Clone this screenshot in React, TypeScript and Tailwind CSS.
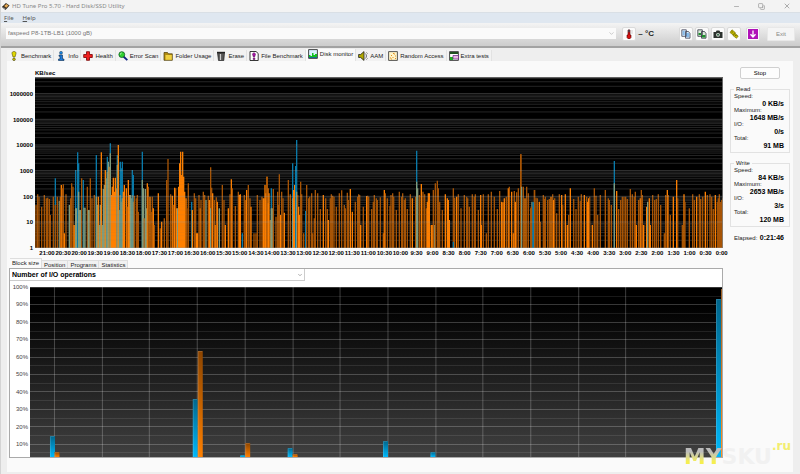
import type { ReactNode } from "react";
import { ChevronDown, Copy, Minus, X } from "lucide-react";

/* ICONS */
const icons: Record<string, ReactNode> = {
  benchmark: (
    <>
      <path d="M5 .5c1.500 0 2.200.8 2 2L6 6H4L3 2.500C2.900 1.300 3.500.5 5 .5z" fill="#e0d800" stroke="#55500a" strokeWidth=".6" />
      <circle cx="5" cy="8.300" r="1.300" fill="#d0c800" stroke="#44400a" strokeWidth=".6" />
    </>
  ),
  info: (
    <>
      <circle cx="5" cy="1.800" r="1.500" fill="#1b86e0" stroke="#123" strokeWidth=".4" />
      <path d="M3 4h3.500v4H8v1.500H2.500V8H4V5.300H3z" fill="#1b78d8" stroke="#0c2c50" strokeWidth=".6" />
    </>
  ),
  health: <path d="M3.500.7h3v2.800h2.800v3H6.500v2.800h-3V6.500H.7v-3h2.800z" fill="#f02020" stroke="#700" strokeWidth=".8" />,
  scan: (
    <>
      <path d="M5.500 5.500l3.800 3.600" stroke="#102080" strokeWidth="1.800" />
      <circle cx="3.800" cy="3.600" r="2.900" fill="#30d030" stroke="#0a5a20" strokeWidth=".8" />
      <path d="M2 3.400L3.600 2" stroke="#d8ffd8" strokeWidth=".9" />
    </>
  ),
  folder: (
    <>
      <path d="M1 1.500h3.500l1 1.300h3.800v6.500H1z" fill="#b08a10" stroke="#4a3a05" strokeWidth=".7" />
      <path d="M2.500 4h6.300v4.800H2.500z" fill="#f0d040" />
    </>
  ),
  erase: (
    <>
      <path d="M1.500 2h7l-.7 7.500H2.500z" fill="#555" stroke="#111" strokeWidth=".6" />
      <path d="M1 1.400h8" stroke="#222" strokeWidth="1.200" />
      <path d="M4.500 3v6" stroke="#ccc" strokeWidth="1.200" />
    </>
  ),
  file: (
    <>
      <path d="M1 .5h6l2.200 2v7H1z" fill="#fff" stroke="#222" strokeWidth=".9" />
      <path d="M5 2c1.300 0 1.500.9 1.300 1.700L5.500 6h-1l-.8-2.300C3.500 2.900 3.700 2 5 2zM4.300 7h1.500v1.500H4.300z" fill="#b010b0" stroke="#601060" strokeWidth=".7" />
    </>
  ),
  monitor: (
    <>
      <path d="M.6.6h8.800v8.800H.6z" fill="#d8f0ff" stroke="#333" strokeWidth=".9" />
      <path d="M1 9V6h1.500v1H4V4h1.500v2H7V5h2v4z" fill="#10c020" />
      <path d="M1 8h8v1H1z" fill="#107090" />
    </>
  ),
  sound: (
    <>
      <path d="M.6 3.500h2L6 .6v8.800L2.600 6.500h-2z" fill="#b0a800" stroke="#222" strokeWidth=".8" />
      <path d="M7.300 2.500c1.500 1.300 1.500 3.700 0 5M8.500 1.500l1 1M8.500 8.500l1-1" fill="none" stroke="#444" strokeWidth=".8" />
    </>
  ),
  random: (
    <>
      <path d="M.6.6h8.800v8.800H.6z" fill="#fff4c8" stroke="#444" strokeWidth=".9" />
      <path d="M2 7h1M3 4.500h1M4.500 6.500h1M6 3h1M7 5h1M5 2.500h1M7 7.500h1M3 8h1" stroke="#e09020" />
    </>
  ),
  extra: (
    <>
      <path d="M.6.6h8.800v8.800H.6z" fill="#fff" stroke="#333" strokeWidth=".9" />
      <path d="M1 1h8v2H1z" fill="#205020" />
      <path d="M1 6h3v3H1z" fill="#20b020" />
      <path d="M4 4.500h5.500V8H4z" fill="#e8b8e0" stroke="#602080" strokeWidth=".7" />
    </>
  ),
  thermo: (
    <>
      <path d="M4 1h2v5h1v2.500L6 9.700H4L3 8.500V6h1z" fill="#d81010" stroke="#500" strokeWidth=".6" />
      <path d="M4.200.8h1.600v2.500H4.200z" fill="#445" />
      <path d="M7.500 2h1M7.500 4h1" stroke="#777" strokeWidth=".6" />
    </>
  ),
  camera: (
    <>
      <path d="M.5 3h2.300L3.600 1.500h2.800L7.200 3h2.300v6h-9z" fill="#2c322e" />
      <circle cx="5" cy="5.800" r="1.900" fill="#d8e0d8" />
      <circle cx="5" cy="5.800" r="1" fill="#2c6040" />
    </>
  ),
  keys: (
    <>
      <path d="M3 .8l3.500 3-2 2.500L1 3.500zM5.500 4l3.700 3-1.700 2.300L4 6.500z" fill="#c0b800" stroke="#7a7400" strokeWidth=".7" />
      <path d="M2.500 3h1.500M6 6.500h1.500" stroke="#5a5400" strokeWidth=".7" />
    </>
  ),
  down: (
    <>
      <path d="M0 0h10v10H0z" fill="#b012b8" />
      <path d="M5 1.500v6.200M2.500 5.300L5 8l2.500-2.700" fill="none" stroke="#fff" strokeWidth="1.300" />
    </>
  ),
  disk: (
    <>
      <path d="M1 5.500L5.500 1 9.500 4 5 9z" fill="#30281c" />
      <path d="M3.500 4.500L6 2.200l2.300 1.700-2.500 2.600z" fill="#e8a850" />
      <path d="M1 5.500L5 9l-.3-2.300z" fill="#8a8a8a" />
    </>
  ),
};

function Icon({ name, className = "size-[10px]" }: { name: string; className?: string }) {
  return (
    <svg viewBox="0 0 10 10" className={`${className} shrink-0`} aria-hidden="true">
      {icons[name]}
    </svg>
  );
}

const tabs = [
  ["benchmark", "Benchmark"],
  ["info", "Info"],
  ["health", "Health"],
  ["scan", "Error Scan"],
  ["folder", "Folder Usage"],
  ["erase", "Erase"],
  ["file", "File Benchmark"],
  ["monitor", "Disk monitor"],
  ["sound", "AAM"],
  ["random", "Random Access"],
  ["extra", "Extra tests"],
];

/* Transfer samples: "x,top" plus b = busy write, r = read, t = both */
const samples = [
  {
    start: -105,
    data:
      "108,420 113,388 117,395 125,425 133,390 139,400 143,398 148,402 151,450 160,395 166,340r 166,420 172,395 178,408t 181,395 184,360b 187,370 190,358 193,505b 198,388 208,420t 212,400 215,355 219,365 222,480b 225,480b 227,315r 227,430t 230,430t 233,262r 236,295r 236,380t 239,435t 242,435t 245,340 250,345r 252,428t 255,428t 262,365 265,435t 268,435t 271,340 276,400 283,390 289,270r 289,395t 292,420t 295,395b 298,480t 301,420t 304,262b 307,480t 310,372t 313,360t 316,315b 319,340t 322,275r 322,320t 325,290t 328,305b 331,235r 331,265t 334,390b 337,365b 340,338b 343,380b 346,338b 349,370b 352,270r 352,300t 355,240b 358,435t 361,290r 361,390t 364,310r 364,410t 367,290r 367,400t 370,380b 373,360b 379,370b 382,425 385,345b 388,390b 391,390t 394,400t 397,315r 397,390t 400,330r 400,410t 403,392 409,400 412,390 415,440 427,260r 427,345t 430,370t 433,460 436,372t 439,430t 442,355b 445,365 450,395b 454,440 457,395 460,430b 463,480 475,385b 481,490 485,470b 493,460 500,345 504,282 512,388 517,392b 520,420 524,368b 527,370 530,430b 533,430t 536,365b 539,295b 542,260b 545,330b 548,260b 551,335b 554,380b 558,400b 561,430 565,355 575,410r 577,435b 583,385 587,400 590,505b 593,505b 597,390 601,430b 603,405 610,380 614,390 618,405t 625,392 628,405b 632,307 632,430t 635,368 638,385b 643,405 646,480b 649,397 652,410b 658,430t 667,360 672,405 676,480b 685,430b 690,388 694,343b 697,370 706,423 715,380 718,390b 721,388b 727,505r 733,390 737,405 740,375b 745,360 750,400 753,425b 762,505 768,505 772,390 780,405 786,395 790,400b 795,360b 798,405b 801,335b 804,370b 807,385b",
  },
  {
    start: 690,
    data:
      "0,400b 3,385b 6,335 10,415b 16,465b 19,370r 19,430t 22,430t 25,372 33,455 38,380 41,420 43,328 47,450b 50,380 54,400 58,443b 70,345 76,388 83,295r 83,400t 86,375b 89,360b 92,303r 95,225r 95,380t 98,390 101,425b 104,450b 107,350 110,388 116,505 122,438r 125,360 131,400 134,395 140,385 143,505 148,460 151,375 158,385 166,432 175,390b 182,400 187,432 190,465b 196,400 199,388 203,392 207,395 214,425 223,385 230,376 238,420 241,430 247,383 250,405 256,372b 262,440b 271,410 278,395 281,388 284,390 287,480b 295,425 305,393b 308,392 311,395 320,432 325,410 328,390 334,400 337,405 346,397 355,505 358,375b 361,385 367,400 375,422 378,390 383,385 386,395 394,435 403,380 410,395 413,385 418,405 421,400 427,432 436,388 442,400b 452,395 455,257r 455,350t 458,370t 463,390 469,357b 474,380 479,388 484,430 487,410b 490,385b 493,385b 499,480b 502,480b 505,375 509,480t 511,355 517,347 520,370 524,410 532,435 541,388b 547,400b 550,405b 553,465b 565,370 565,530r 569,398 575,395b 580,388 588,430 598,390 605,395 608,400 613,425 622,388 628,395 631,388 640,435 647,390b 649,480b 655,388 664,505 670,388 679,380 688,395 697,432 704,378 710,410b 714,412b 718,400b 724,395 730,370b 733,365 740,380b 745,505b 748,378 751,410b 755,382 760,370 767,268 768,268 770,365t 775,365 780,400b 785,365 790,385 797,430 801,410t 805,410r 808,375",
  },
  {
    start: 1485,
    data:
      "4,425 10,412r 14,375 18,398 22,400 28,410b 31,470 40,390 43,402 46,395 53,405 58,402 63,395b 68,388 71,405b 74,400 80,445 88,388 95,390b 98,420 106,388b 112,480b 116,450 121,370b 131,402 138,432 145,395 151,408 154,388 163,390b 170,395 173,410b 176,400b 179,395 187,480b 193,370 198,392 203,450 211,390 226,375 235,400 238,405 244,420 253,288r 253,355t 260,378b 266,432 272,405 277,395 282,395 287,395 292,402 301,372 307,388 313,395 316,380 319,480b 326,405 331,400b 334,375 337,390 341,480b 350,425b 353,410t 358,400b 361,480b 368,390 374,405 379,402 385,388 392,420 403,505 407,390 412,375b 415,390 421,450 430,395b 440,345b 443,400 457,480 462,388b 465,410 478,430 488,388 493,405 500,395b 508,388 512,402 518,395 526,380b 532,390 540,388 545,395 550,432 556,390b 562,410 565,400 568,388 572,410 575,405 578,400b",
  },
];

const colors: Record<string, string> = { b: "#ff8000", r: "#087aaa", t: "#829c7c" };

const minorLines = [0, 1, 2, 3, 4, 5, 6].flatMap((d) =>
  [2, 3, 4, 5, 6, 7, 8, 9].map((n) => 513 - 77 * (d + Math.log10(n)))
).filter((y) => y > 2);

const times = Array.from({ length: 43 }, (_, i) => {
  const half = 42 - i;
  return `${Math.floor(half / 2)}:${half % 2 ? "30" : "00"}`;
});

function SpeedChart() {
  return (
    <svg viewBox="0 0 2064 513" preserveAspectRatio="none" className="h-[171px] w-full bg-black" role="img" aria-label="Disk speed">
      {minorLines.map((y) => (
        <path key={y} d={`M0 ${y}H2064`} stroke="#212121" strokeWidth="3" />
      ))}
      {samples.map((part) => (
        <g key={part.start} transform={`translate(${part.start} -36)`}>
          {part.data.split(" ").map((item, i) => {
            const kind = item.slice(-1);
            const [x, top] = item.split(",").map((n) => parseInt(n, 10));
            return <path key={i} d={`M${x} ${top}V549`} stroke={colors[kind] ?? "#a85404"} strokeWidth="4" />;
          })}
        </g>
      ))}
      {[0, 1, 2, 3, 4, 5, 6].map((d) => (
        <path key={d} d={`M0 ${512 - 77 * d}H2064`} stroke="#9a9a9a" strokeOpacity=".36" strokeWidth="3" />
      ))}
      {minorLines.map((y) => (
        <path key={y} d={`M0 ${y}H2064`} stroke="#777" strokeOpacity=".07" strokeWidth="3" />
      ))}
      <path d="M0 1H2063V513" fill="none" stroke="#777" strokeWidth="3" />
    </svg>
  );
}

const blocks = [
  { x: 20, y: 149, fill: "url(#read)" },
  { x: 24.5, y: 165, fill: "url(#write)" },
  { x: 163, y: 112, fill: "url(#read)" },
  { x: 168, y: 64, fill: "url(#write)" },
  { x: 210.5, y: 168, fill: "url(#read)" },
  { x: 215.5, y: 156, fill: "url(#write)" },
  { x: 258, y: 161, fill: "url(#read)" },
  { x: 263, y: 167, fill: "url(#write)" },
  { x: 353.5, y: 154, fill: "url(#read)" },
  { x: 401, y: 165, fill: "url(#read)" },
  { x: 687, y: 12, fill: "url(#read)" },
  { x: 692, y: 2, fill: "url(#write)" },
];

function BlockChart() {
  return (
    <svg viewBox="0 0 693 170" preserveAspectRatio="none" className="h-[170px] w-full min-w-0 flex-1" role="img" aria-label="Block size">
      <defs>
        <linearGradient id="back" x2="0" y2="1">
          <stop offset=".1" stopColor="#000" />
          <stop offset="1" stopColor="#404040" />
        </linearGradient>
        <linearGradient id="read" x2="0" y2="1">
          <stop stopColor="#00668c" />
          <stop offset="1" stopColor="#00b8fa" />
        </linearGradient>
        <linearGradient id="write" x2="0" y2="1">
          <stop stopColor="#8c4500" />
          <stop offset="1" stopColor="#ff8000" />
        </linearGradient>
      </defs>
      <path d="M0 0h693v170H0z" fill="url(#back)" />
      {Array.from({ length: 20 }, (_, i) => (
        <path key={i} d={`M0 ${Math.round(i * 8.7) + 0.5}H693`} stroke="#fff" strokeOpacity={i % 2 ? 0.1 : 0.22} />
      ))}
      {Array.from({ length: 13 }, (_, i) => (
        <path key={i} d={`M${Math.round(24 + i * 47.7) + 0.5} 0V170`} stroke="#fff" strokeOpacity=".24" />
      ))}
      {blocks.map((b) => (
        <g key={b.x}>
          <rect x={b.x} y={b.y} width="5" height={170 - b.y} fill={b.fill} />
          <path d={`M${b.x + 0.5} 170V${b.y + 0.5}h4`} fill="none" stroke="#fff" strokeOpacity=".15" />
        </g>
      ))}
    </svg>
  );
}

function Stats({ title, rows }: { title: string; rows: string[][] }) {
  return (
    <fieldset className="border border-[#e2e2e2] px-[3px] pb-[3px]">
      <legend className="px-[2px] leading-[8px]">{title}</legend>
      <dl className="leading-[7px]">
        {rows.map(([label, value]) => (
          <div key={label}>
            <dt>{label}:</dt>
            <dd className="pr-[2px] text-right text-[7px] font-bold text-black">{value}</dd>
          </div>
        ))}
      </dl>
    </fieldset>
  );
}

const toolButton = "grid size-[14px] place-items-center rounded-[2px] border border-[#dadada] bg-[#fbfbfb]";

export default function App() {
  return (
    <div className="flex min-h-screen flex-col border-l border-[#d4d4d4] bg-[#eeeeee] font-['Liberation_Sans',sans-serif] text-[6px] leading-[8px] text-[#222]">
      {/* TITLE BAR */}
      <header className="flex h-[12px] items-center bg-[#f3f3f3] text-[#888]">
        <Icon name="disk" className="size-[9px]" />
        <h1 className="ml-[2px] font-['Noto_Sans',sans-serif]">HD Tune Pro 5.70 - Hard Disk/SSD Utility</h1>
        <div className="ml-auto flex items-center gap-[18px] pr-[9px]">
          <button aria-label="Minimize"><Minus className="size-[7px]" /></button>
          <button aria-label="Restore"><Copy className="size-[7px] -scale-x-100 rotate-90" /></button>
          <button aria-label="Close"><X className="size-[8px]" /></button>
        </div>
      </header>

      {/* MENU */}
      <nav className="flex h-[11px] items-center gap-[9px] border-t border-[#d9dfe5] bg-[#dfe7f0] px-[3px] font-['Noto_Sans',sans-serif] text-[#555]">
        <button><u>F</u>ile</button>
        <button><u>H</u>elp</button>
      </nav>

      {/* TOOLBAR */}
      <div className="flex h-[25px] items-center border-b-2 border-[#a2a2a2] bg-gradient-to-b from-[#f4f4f4] to-[#cccccc] px-[5px] pb-[2px]">
        <div className="relative flex-1">
          <select aria-label="Drive" className="block h-[11px] w-full appearance-none bg-[#fafafa] px-[2px] font-['Liberation_Sans',sans-serif] text-[6px] leading-[11px] text-[#777]">
            <option>faspeed P8-1TB-LB1 (1000 gB)</option>
          </select>
          <ChevronDown className="pointer-events-none absolute top-[2px] right-[1px] size-[7px] text-[#aaa]" />
        </div>
        <button aria-label="Temperature" className={`${toolButton} ml-[6px]`}><Icon name="thermo" /></button>
        <span className="ml-[2px] text-[8px] font-bold">– °C</span>
        <div className="ml-[25px] flex gap-[2px]">
          <button aria-label="Copy text" className={toolButton}>
            <svg viewBox="0 0 10 10" className="size-[10px]"><path d="M.8.8h4.500v6.500H.8zM4.500 2.500h3l1.500 2v4.700H4.500z" fill="#d8ecff" stroke="#445" strokeWidth=".8" /><path d="M5.200 5h3M5.200 7h3M1.700 3h2M1.700 5h2" stroke="#3888d0" /></svg>
          </button>
          <button aria-label="Copy picture" className={toolButton}>
            <svg viewBox="0 0 10 10" className="size-[10px]"><path d="M.8.8h4.500v6.500H.8zM4.500 2.500h3l1.500 2v4.700H4.500z" fill="#d8ecd8" stroke="#334" strokeWidth=".8" /><path d="M5 6h3.500v2.500H5zM1.500 4h2.500v2H1.500z" fill="#209030" /></svg>
          </button>
          <button aria-label="Screenshot" className={toolButton}><Icon name="camera" /></button>
          <button aria-label="Options" className={toolButton}><Icon name="keys" /></button>
          <button aria-label="Save" className={`${toolButton} ml-[3px]`}><Icon name="down" /></button>
        </div>
        <button className="ml-[7px] h-[14px] w-[28px] rounded-[1px] border border-[#e8e8e8] bg-[#f5f5f5] text-[#888]">Exit</button>
      </div>

      {/* TABS */}
      <div role="tablist" className="mt-px ml-[6px] flex items-end">
        {tabs.map(([icon, label]) => (
          <button
            key={icon}
            role="tab"
            aria-selected={icon === "monitor"}
            className="flex h-[11px] items-center gap-[2px] border-r border-[#e2e2e2] bg-[#f2f2f2] px-[2px] whitespace-nowrap aria-selected:h-[12px] aria-selected:bg-[#fafafa] aria-selected:pb-[2px]"
          >
            <Icon name={icon} />
            {label}
          </button>
        ))}
      </div>

      <main className="mr-[7px] mb-[2px] ml-[6px] flex flex-1 gap-[7px] bg-[#fafafa] pr-[3px] pb-[12px]">
        <section className="min-w-0 flex-1 pt-[8px]">
          {/* SPEED */}
          <div className="flex">
            <div className="mt-[21px] -mb-[4px] flex w-[28px] shrink-0 flex-col justify-between pr-[2px] text-right font-bold text-black">
              {["1000000", "100000", "10000", "1000", "100", "10", "1"].map((n) => (
                <span key={n}>{n}</span>
              ))}
            </div>
            <div className="min-w-0 flex-1">
              <h2 className="h-[8px] font-bold text-black">KB/sec</h2>
              <SpeedChart />
            </div>
          </div>
          <div className="-mr-[7px] ml-[32px] flex h-[10px] items-center text-center font-bold text-black">
            {times.map((t) => (
              <span key={t} className="flex w-0 flex-1 justify-center whitespace-nowrap">{t}</span>
            ))}
          </div>

          {/* BLOCK SIZE */}
          <div role="tablist" className="ml-[3px] flex h-[10px] items-end">
            {["Block size", "Position", "Programs", "Statistics"].map((t, i) => (
              <button
                key={t}
                role="tab"
                aria-selected={i === 0}
                className="h-[8px] border-t border-r border-[#dedede] bg-[#f1f1f1] px-[2px] aria-selected:h-[10px] aria-selected:bg-[#fafafa] aria-selected:pb-[2px]"
              >
                {t}
              </button>
            ))}
          </div>
          <div className="ml-[2px] border border-[#aaa] bg-white">
            <div className="relative w-[295px] max-w-full">
              <select aria-label="Chart value" className="block h-[12px] w-full appearance-none border-r border-b border-[#ccc] px-[2px] font-['Liberation_Sans',sans-serif] text-[7px] leading-[11px] font-bold text-black">
                <option>Number of I/O operations</option>
              </select>
              <ChevronDown className="pointer-events-none absolute top-[3px] right-[2px] size-[6px] text-[#666]" />
            </div>
            <div className="mt-[6px] flex">
              <div className="-mt-[4px] mb-[9px] flex w-[20px] shrink-0 flex-col justify-between pr-[2px] text-right text-[#444]">
                {[100, 90, 80, 70, 60, 50, 40, 30, 20, 10].map((n) => (
                  <span key={n}>{n}%</span>
                ))}
              </div>
              <BlockChart />
            </div>
          </div>
        </section>

        {/* RESULTS */}
        <aside className="flex w-[60px] shrink-0 flex-col pt-[6px]">
          <button className="mx-auto h-[12px] w-[40px] rounded-[2px] border border-[#d0d0d0] bg-[#fdfdfd] text-black">Stop</button>
          <div className="mt-[6px] flex flex-col gap-[6px]">
            <Stats title="Read" rows={[["Speed", "0 KB/s"], ["Maximum", "1648 MB/s"], ["I/O", "0/s"], ["Total", "91 MB"]]} />
            <Stats title="Write" rows={[["Speed", "84 KB/s"], ["Maximum", "2653 MB/s"], ["I/O", "3/s"], ["Total", "120 MB"]]} />
          </div>
          <p className="mt-[7px] flex justify-between pr-[6px] pl-[4px]">
            Elapsed: <b className="text-[7px] text-black">0:21:46</b>
          </p>
        </aside>
      </main>

      <div className="pointer-events-none absolute right-[9px] bottom-[5px] flex font-['DejaVu_Sans',sans-serif] font-bold">
        <span className="text-[22px] leading-[24px] text-[#efefef]/80">
          <span className="bg-gradient-to-b from-[#bbb] from-30% to-[#f5ee50] to-70% bg-clip-text text-transparent">MY</span>SKU
        </span>
        <span className="-mt-[6px] text-[12px] leading-[14px] text-[#f3ee70]">.ru</span>
      </div>
    </div>
  );
}
